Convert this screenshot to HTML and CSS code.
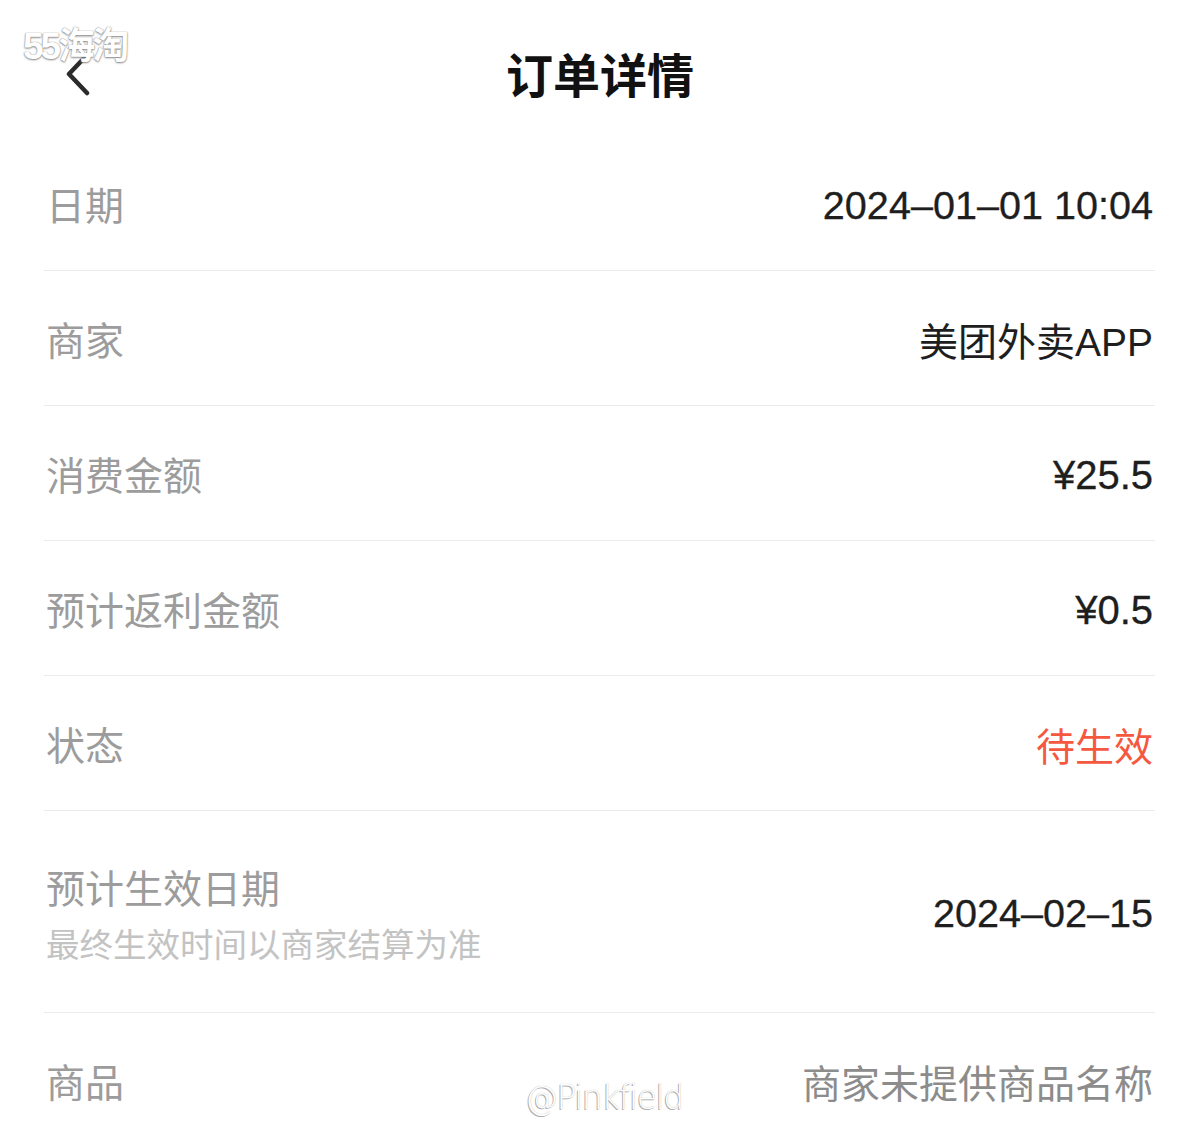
FILE: index.html
```html
<!DOCTYPE html>
<html lang="zh-CN">
<head>
  <meta charset="UTF-8">
  <meta name="viewport" content="width=device-width, initial-scale=1.0">
  <title>订单详情</title>
  <link rel="stylesheet" href="styles.css">
</head>
<body>
  <header class="nav">
    <span class="back">
      <svg width="30" height="50" viewBox="0 0 30 50">
        <polyline points="21,3 3,22 21,41" fill="none" stroke="#2b2b2b" stroke-width="4.5" stroke-linecap="round" stroke-linejoin="round"/>
      </svg>
    </span>
    <h1>订单详情</h1>
  </header>

  <main class="detail">
    <div class="row">
      <span class="label">日期</span>
      <span class="value num">2024–01–01 10:04</span>
    </div>
    <div class="row">
      <span class="label">商家</span>
      <span class="value">美团外卖APP</span>
    </div>
    <div class="row">
      <span class="label">消费金额</span>
      <span class="value num money">¥25.5</span>
    </div>
    <div class="row">
      <span class="label">预计返利金额</span>
      <span class="value num money">¥0.5</span>
    </div>
    <div class="row">
      <span class="label">状态</span>
      <span class="value status">待生效</span>
    </div>
    <div class="row tall">
      <div class="label-group">
        <span class="label">预计生效日期</span>
        <span class="hint">最终生效时间以商家结算为准</span>
      </div>
      <span class="value num">2024–02–15</span>
    </div>
    <div class="row">
      <span class="label">商品</span>
      <span class="value muted">商家未提供商品名称</span>
    </div>
  </main>

  <!-- watermarks from the screenshot -->
  <span class="mark mark-site">55海淘</span>
  <span class="mark mark-user">@Pinkfield</span>
</body>
</html>
```

FILE: styles.css
```css
body {
  margin: 0;
  background: #fff;
  font-family: "Liberation Sans", "Noto Sans CJK SC", sans-serif;
  color: #222;
}

.nav {
  position: relative;
  height: 136px;
  display: flex;
  align-items: center;
  justify-content: center;
}
.nav h1 {
  margin: 8px 0 0;
  font-size: 47px;
  font-weight: bold;
  color: #111;
}
.back {
  position: absolute;
  left: 66px;
  top: 52px;
  width: 30px;
  height: 50px;
}

.detail {
  padding: 0 45px 0 44px;
}
.row {
  height: 134px;
  display: flex;
  align-items: center;
  justify-content: space-between;
  border-bottom: 1px solid #ebebeb;
}
.row.tall {
  height: 201px;
}
.label {
  font-size: 39px;
  color: #9c9c9c;
  padding-left: 2px;
}
.label-group {
  display: flex;
  flex-direction: column;
}
.label-group .label {
  line-height: 64px;
}
.hint {
  margin-top: 4px;
  line-height: 40px;
  font-size: 33.5px;
  color: #c3c3c3;
  padding-left: 2px;
}
.value {
  font-size: 39px;
  color: #1e1e1e;
  padding-right: 2px;
  padding-top: 2px;
}
.num {
  font-size: 39.6px;
  padding-top: 4px;
  -webkit-text-stroke: 0.3px #1e1e1e;
}
.money {
  font-size: 40px;
}
.status {
  color: #f5583f;
}
.muted {
  color: #8c8c8c;
}

.mark {
  position: absolute;
  color: #fff;
  white-space: nowrap;
}
.mark-site {
  left: 23px;
  top: 16px;
  font-size: 37px;
  font-weight: bold;
  letter-spacing: -3px;
  text-shadow: 0 1px 2px #888, 0 0 1px #666;
}
.mark-user {
  left: 525px;
  top: 1078px;
  font-size: 33px;
  font-family: "DejaVu Sans", sans-serif;
  font-weight: 200;
  letter-spacing: -1.5px;
  text-shadow: -1px 1px 0 #b0b0b0, 0 0 1px #aaa;
}
```
